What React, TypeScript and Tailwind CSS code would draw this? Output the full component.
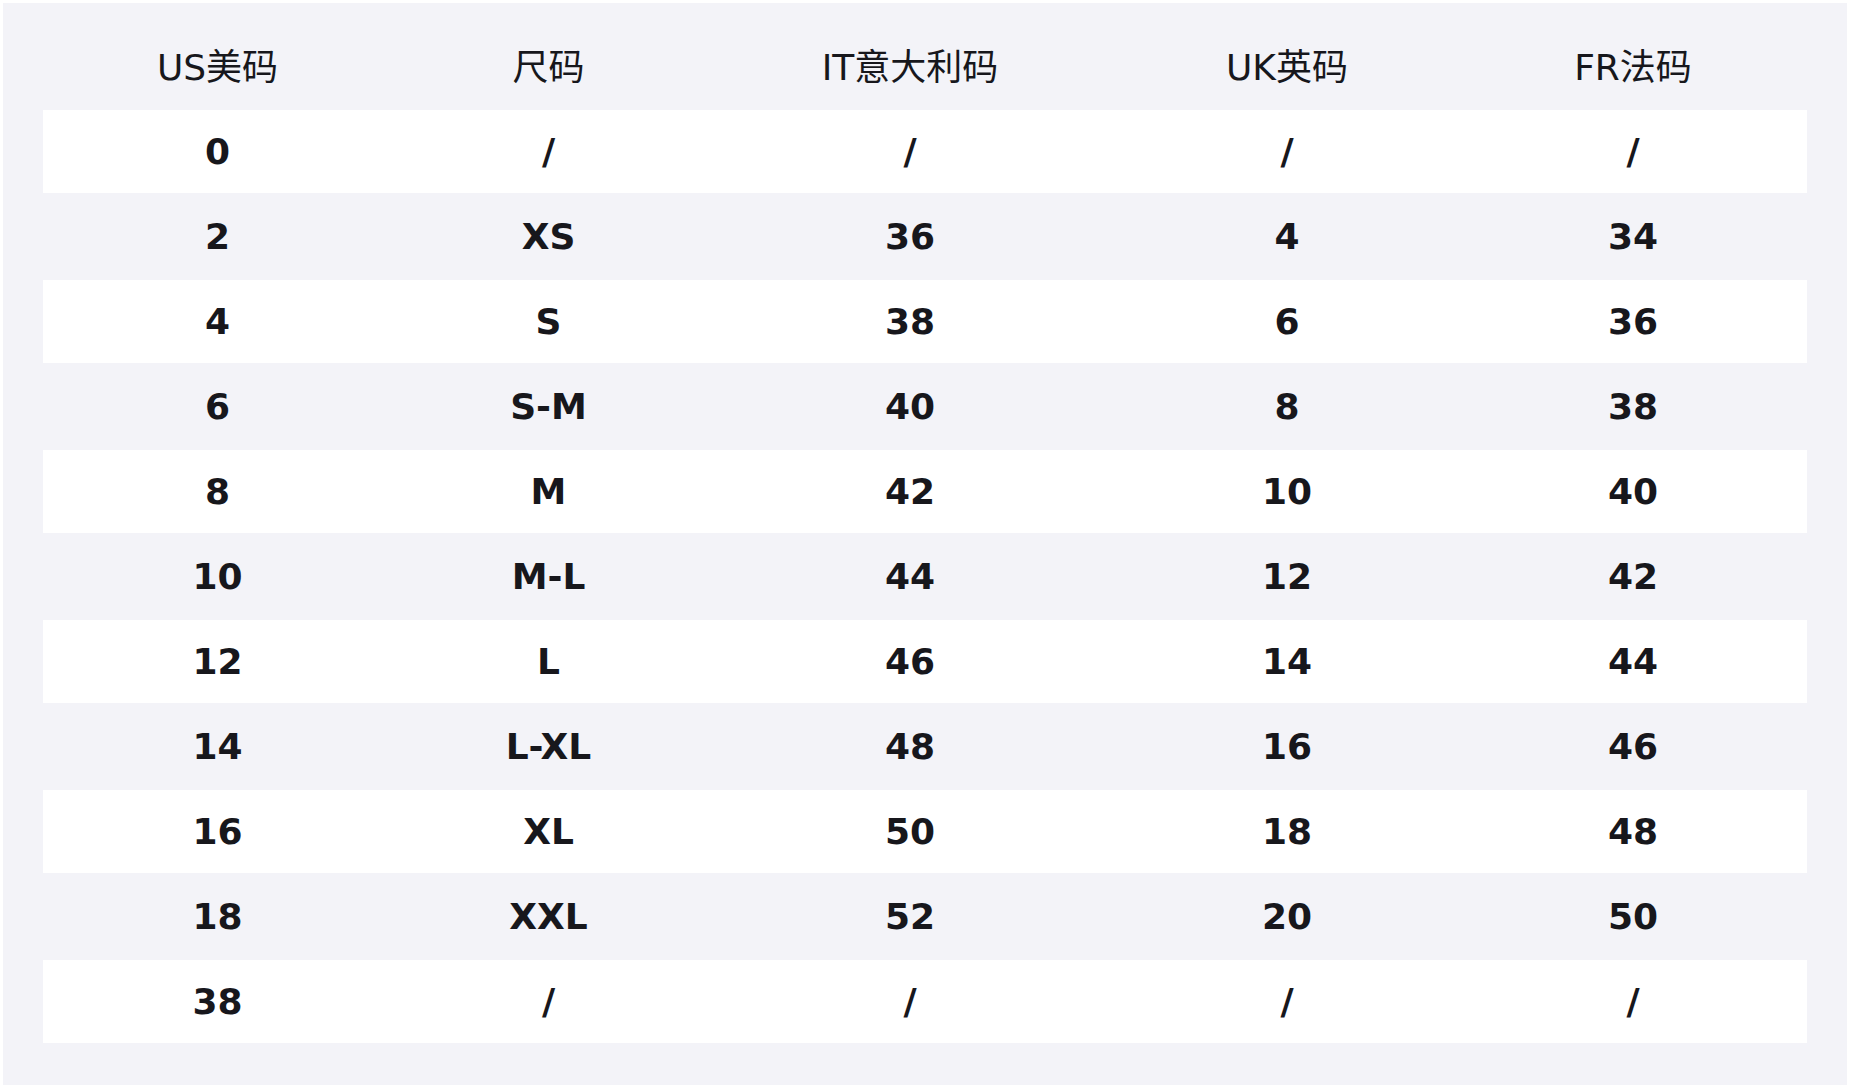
const headers = ['US美码', '尺码', 'IT意大利码', 'UK英码', 'FR法码']

const rows: string[][] = [
  ['0', '/', '/', '/', '/'],
  ['2', 'XS', '36', '4', '34'],
  ['4', 'S', '38', '6', '36'],
  ['6', 'S-M', '40', '8', '38'],
  ['8', 'M', '42', '10', '40'],
  ['10', 'M-L', '44', '12', '42'],
  ['12', 'L', '46', '14', '44'],
  ['14', 'L-XL', '48', '16', '46'],
  ['16', 'XL', '50', '18', '48'],
  ['18', 'XXL', '52', '20', '50'],
  ['38', '/', '/', '/', '/'],
]

const colClasses = ['w-[349px]', 'w-[313px]', 'w-[410px]', 'w-[344px]', 'w-[348px]']

const fontStack = "font-['DejaVu_Sans','Noto_Sans_CJK_SC',sans-serif]"

export default function App() {
  return (
    <div className="bg-white p-[3px] min-h-[1088px]">
      <div className={`bg-[#f3f3f8] px-[40px] pt-[23px] pb-[42px] text-[#17171c] ${fontStack}`}>
        {/* header */}
        <div className="flex h-[84px] items-center">
          {headers.map((h, i) => (
            <div key={h} className={`${colClasses[i]} shrink-0 text-center text-[36px] leading-none`}>
              {h}
            </div>
          ))}
        </div>

        {/* body rows */}
        {rows.map((row, r) => (
          <div
            key={r}
            className={`flex items-center ${r % 2 === 0 ? 'h-[83px] bg-white' : 'h-[87px]'}`}
          >
            {row.map((cell, i) => (
              <div
                key={i}
                className={`${colClasses[i]} shrink-0 text-center text-[36px] font-bold leading-none`}
              >
                {cell}
              </div>
            ))}
          </div>
        ))}
      </div>
    </div>
  )
}
